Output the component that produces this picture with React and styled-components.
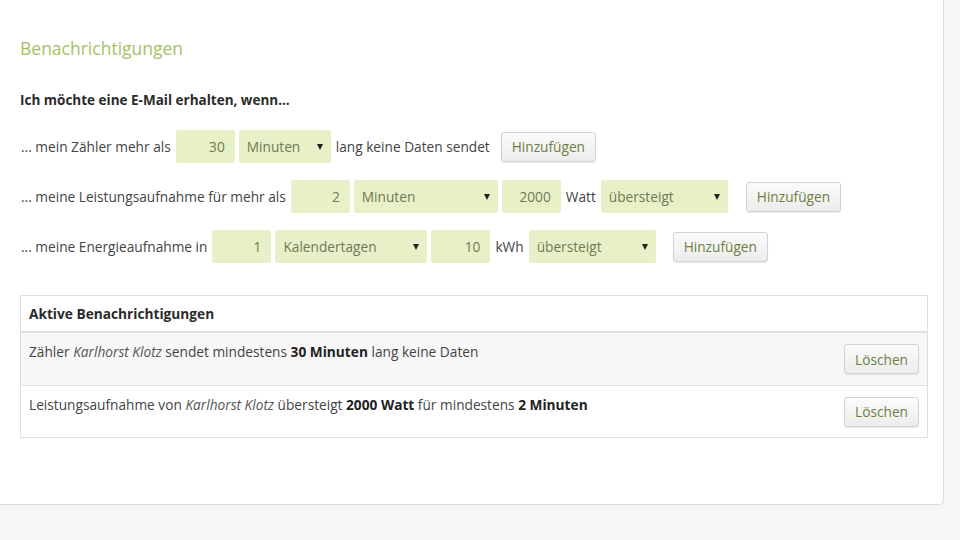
import React from "react";
import styled, { createGlobalStyle } from "styled-components";

const GlobalStyle = createGlobalStyle`
  html, body {
    margin: 0;
    padding: 0;
    background: #f6f6f6;
    font-family: "Open Sans", "Noto Sans", sans-serif;
    color: #333;
  }
`;

const Panel = styled.div`
  box-sizing: border-box;
  width: 944px;
  height: 505px;
  background: #fff;
  border-right: 1px solid #dcdcdc;
  border-bottom: 1px solid #dcdcdc;
  border-bottom-right-radius: 5px;
  box-shadow: 0 1px 0 #ececec;
  padding: 36px 0 0 20px;
`;

const Title = styled.h2`
  margin: 0;
  font-size: 17.5px;
  line-height: 24px;
  font-weight: 400;
  color: #a6c25f;
`;

const Lead = styled.p`
  margin: 31px 0 21px;
  font-size: 13.5px;
  line-height: 18px;
  font-weight: 700;
  color: #2b2b2b;
`;

const Rows = styled.div`
  display: flex;
  flex-direction: column;
  gap: 17px;
`;

const Row = styled.div`
  display: flex;
  align-items: center;
  height: 33px;
  gap: 4px;
  font-size: 13.7px;
  color: #444;
`;

const Label = styled.span`
  white-space: nowrap;
  padding: 0 1px;
`;

const NumberField = styled.div`
  box-sizing: border-box;
  width: 59px;
  height: 33px;
  background: #e7f0c6;
  border-radius: 2px;
  display: flex;
  align-items: center;
  justify-content: flex-end;
  padding-right: 10px;
  color: #6f7a55;
`;

const Select = styled.div`
  box-sizing: border-box;
  width: ${(p) => p.$w}px;
  height: 33px;
  background: #e7f0c6;
  border-radius: 2px;
  display: flex;
  align-items: center;
  justify-content: space-between;
  padding: 0 8px;
  color: #6f7a55;

  &::after {
    content: "";
    border-left: 3px solid transparent;
    border-right: 3px solid transparent;
    border-top: 6px solid #222;
  }
`;

const Button = styled.button`
  box-sizing: border-box;
  margin-left: ${(p) => p.$gap || 0}px;
  height: 30px;
  padding: 0 10px;
  font-family: inherit;
  font-size: 13.7px;
  color: #6c7f3e;
  background: linear-gradient(#fbfbfb, #ececec);
  border: 1px solid #d2d2d2;
  border-radius: 3px;
  box-shadow: 0 1px 1px rgba(0, 0, 0, 0.08);
  cursor: pointer;
`;

const Table = styled.div`
  box-sizing: border-box;
  width: 908px;
  margin-top: 32px;
  border: 1px solid #dedede;
  font-size: 13.7px;
`;

const HeadRow = styled.div`
  height: 35px;
  display: flex;
  align-items: center;
  padding-left: 8px;
  font-weight: 700;
  color: #2b2b2b;
  border-bottom: 2px solid #e0e0e0;
`;

const DataRow = styled.div`
  box-sizing: border-box;
  height: 52px;
  display: flex;
  justify-content: space-between;
  align-items: center;
  padding: 0 8px;
  background: ${(p) => (p.$alt ? "#f7f7f7" : "#fff")};
  border-top: ${(p) => (p.$first ? "none" : "1px solid #e2e2e2")};
  color: #444;
`;

const RowText = styled.div`
  align-self: flex-start;
  padding-top: 10px;
  line-height: 18px;

  b {
    color: #222;
  }
  i {
    color: #555;
  }
`;

export default function App() {
  return (
    <>
      <GlobalStyle />
      <Panel>
        <Title>Benachrichtigungen</Title>
        <Lead>Ich möchte eine E-Mail erhalten, wenn...</Lead>
        <Rows>
          <Row>
            <Label>... mein Zähler mehr als</Label>
            <NumberField>30</NumberField>
            <Select $w={92}>Minuten</Select>
            <Label>lang keine Daten sendet</Label>
            <Button $gap={6}>Hinzufügen</Button>
          </Row>
          <Row>
            <Label>... meine Leistungsaufnahme für mehr als</Label>
            <NumberField>2</NumberField>
            <Select $w={144}>Minuten</Select>
            <NumberField>2000</NumberField>
            <Label>Watt</Label>
            <Select $w={127}>übersteigt</Select>
            <Button $gap={14}>Hinzufügen</Button>
          </Row>
          <Row>
            <Label>... meine Energieaufnahme in</Label>
            <NumberField>1</NumberField>
            <Select $w={152}>Kalendertagen</Select>
            <NumberField>10</NumberField>
            <Label>kWh</Label>
            <Select $w={127}>übersteigt</Select>
            <Button $gap={13}>Hinzufügen</Button>
          </Row>
        </Rows>
        <Table>
          <HeadRow>Aktive Benachrichtigungen</HeadRow>
          <DataRow $alt $first>
            <RowText>
              Zähler <i>Karlhorst Klotz</i> sendet mindestens <b>30 Minuten</b> lang keine Daten
            </RowText>
            <Button>Löschen</Button>
          </DataRow>
          <DataRow>
            <RowText>
              Leistungsaufnahme von <i>Karlhorst Klotz</i> übersteigt <b>2000 Watt</b> für mindestens <b>2 Minuten</b>
            </RowText>
            <Button>Löschen</Button>
          </DataRow>
        </Table>
      </Panel>
    </>
  );
}
